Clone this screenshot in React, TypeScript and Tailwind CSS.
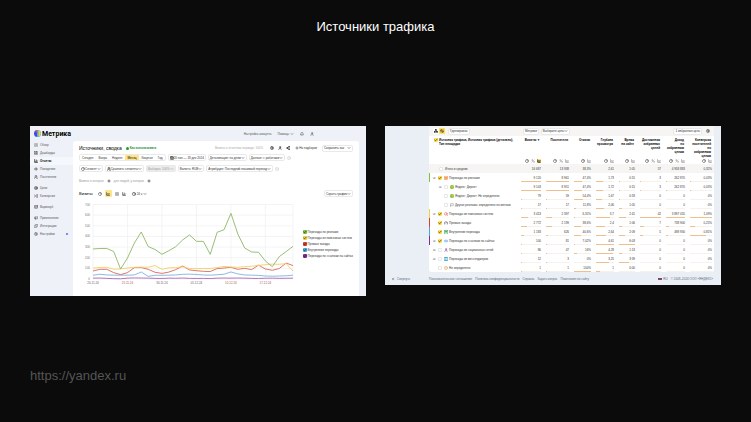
import type { ComponentType, ReactNode } from "react";
import {
  ArrowLeftRight, AreaChart, BarChart3, Bell, Bookmark, CalendarDays, Check, ChevronDown, ChevronsLeft,
  Clock, Database, Eye, Flag, Gauge, House, LayoutGrid, List, Megaphone, Network, PieChart, Plus, Puzzle,
  Radio, Search, Settings, Send, Share2, Shuffle, Target, User, Users, Link2, Percent, HelpCircle,
} from "lucide-react";

type IconType = ComponentType<{ className?: string; strokeWidth?: number }>;

function Icon({ as: As, className = "" }: { as: IconType; className?: string }) {
  return <As className={`size-[4px] shrink-0 ${className}`} strokeWidth={3} />;
}

function Btn({ children, className = "" }: { children: ReactNode; className?: string }) {
  return (
    <button
      type="button"
      className={`flex h-[7px] shrink-0 items-center rounded-[2px] border border-[#e9e9e9] px-px whitespace-nowrap ${className}`}
    >
      {children}
    </button>
  );
}

function Tick({ label, checked, color = "bg-[#ffdf4d]" }: { label: string; checked?: boolean; color?: string }) {
  return (
    <span className="grid size-[4px] shrink-0">
      <input
        type="checkbox"
        aria-label={label}
        defaultChecked={checked}
        className={`col-start-1 row-start-1 size-[4px] appearance-none rounded-[1px] ${checked ? color : "border border-[#e6e6e6] bg-white"}`}
      />
      {checked && <Check className="pointer-events-none col-start-1 row-start-1 size-[4px] text-[#222]" strokeWidth={4} />}
    </span>
  );
}

const nav: { icon: IconType; label: string; active?: boolean; dot?: boolean }[][] = [
  [
    { icon: List, label: "Обзор" },
    { icon: LayoutGrid, label: "Дашборды" },
    { icon: BarChart3, label: "Отчеты", active: true },
    { icon: Eye, label: "Поведение" },
    { icon: Users, label: "Посетители" },
  ],
  [
    { icon: Target, label: "Цели" },
    { icon: Shuffle, label: "Конверсии" },
  ],
  [{ icon: Database, label: "Вариокуб" }],
  [
    { icon: Megaphone, label: "Привлечение" },
    { icon: Puzzle, label: "Интеграции" },
    { icon: Settings, label: "Настройки", dot: true },
  ],
];

const series = [
  { name: "Переходы по рекламе", stroke: "#8fb569", box: "bg-[#7cc142]", values: [282, 287, 287, 258, 94, 197, 338, 442, 305, 277, 232, 266, 304, 367, 414, 354, 354, 232, 439, 463, 617, 423, 291, 254, 251, 169, 116, 210, 257, 307] },
  { name: "Переходы из поисковых систем", stroke: "#f2cf63", box: "bg-[#f5d03c]", values: [103, 108, 110, 92, 95, 103, 110, 112, 110, 126, 91, 105, 107, 114, 98, 98, 98, 99, 107, 118, 113, 110, 116, 120, 128, 135, 140, 138, 145, 75] },
  { name: "Прямые заходы", stroke: "#d9695a", box: "bg-[#d9402f]", values: [75, 91, 91, 60, 41, 60, 107, 107, 91, 63, 53, 65, 88, 122, 85, 78, 72, 70, 98, 103, 110, 91, 100, 88, 130, 94, 82, 98, 150, 126] },
  { name: "Внутренние переходы", stroke: "#7fb2dd", box: "bg-[#4ba3e3]", values: [35, 45, 38, 36, 36, 36, 38, 66, 24, 35, 35, 36, 38, 44, 46, 42, 38, 36, 40, 45, 66, 48, 38, 36, 34, 28, 26, 28, 30, 36] },
  { name: "Переходы по ссылкам на сайтах", stroke: "#a766b8", box: "bg-[#7d2f96]", values: [8, 9, 6, 3, 2, 8, 10, 9, 8, 6, 5, 8, 7, 9, 6, 5, 6, 4, 8, 9, 8, 9, 8, 6, 5, 7, 8, 6, 7, 8] },
];

const days = ["20.11.24", "25.11.24", "30.11.24", "05.12.24", "10.12.24", "17.12.24"];

function Chart() {
  const left = 14;
  const bottom = 79;
  const stepX = 200 / 29;
  const perHundred = 10.64;
  const y = (v: number) => bottom - (v / 100) * perHundred;
  return (
    <svg viewBox="0 0 216 86" className="w-[216px] shrink-0" role="img" aria-label="График визитов">
      {[0, 100, 200, 300, 400, 500, 600, 700].map((v) => (
        <g key={v}>
          <line x1={left} x2={left + 200} y1={y(v)} y2={y(v)} stroke="#ececec" strokeWidth="0.6" />
          <text x={left - 3} y={y(v) + 1} fontSize="3" textAnchor="end" fill="#777">{v}</text>
        </g>
      ))}
      {days.map((d, i) => (
        <g key={d}>
          <line x1={left + i * stepX * 5} x2={left + i * stepX * 5} y1={y(700)} y2={bottom} stroke="#ececec" strokeWidth="0.6" />
          <text x={left + i * stepX * 5} y={bottom + 5} fontSize="3" textAnchor="middle" fill={i === 1 || i === 4 || i === 5 ? "#b05a55" : "#666"}>{d}</text>
        </g>
      ))}
      <line x1={left + 200} x2={left + 200} y1={y(700)} y2={bottom} stroke="#ececec" strokeWidth="0.6" />
      {[...series].reverse().map((s) => (
        <polyline
          key={s.name}
          fill="none"
          stroke={s.stroke}
          strokeWidth="0.9"
          strokeLinejoin="round"
          points={s.values.map((v, i) => `${left + i * stepX},${y(v)}`).join(" ")}
        />
      ))}
    </svg>
  );
}

function Logo() {
  return (
    <svg viewBox="0 0 14 14" className="size-[7px] shrink-0" aria-hidden="true">
      <path d="M7 0a7 7 0 0 0 0 14z" fill="#3d4fe0" />
      <path d="M7 0a7 7 0 0 0-5 2.200L7 7z" fill="#f2503b" />
      <path d="M7 0v14a7 7 0 0 0 0-14z" fill="#28b4f0" />
      <path d="M9 0.500v13A7 7 0 0 0 9 .5z" fill="#ffd43b" />
    </svg>
  );
}

function Overview() {
  const periods = ["Сегодня", "Вчера", "Неделя", "Месяц", "Квартал", "Год"];
  return (
    <section className="overflow-hidden bg-[#eef2f8] text-[3px] leading-[4px] text-[#333]">
      <header className="flex h-[15px] items-center gap-px pr-[52px] pl-[4px]">
        <Logo />
        <span className="font-['Roboto',sans-serif] text-[7px] leading-[8px] font-bold text-black">Метрика</span>
        <nav className="ml-auto flex items-center gap-[6px] text-[#555]">
          <a href="#account">Настройка аккаунта</a>
          <a href="#help" className="flex items-center gap-px">Помощь <Icon as={ChevronDown} /></a>
          <Icon as={Bell} />
          <Icon as={User} />
        </nav>
      </header>
      <div className="flex">
        <nav className="flex w-[43px] shrink-0 flex-col gap-[3px]">
          {nav.map((group, i) => (
            <ul key={i}>
              {group.map((n) => (
                <li key={n.label}>
                  <a
                    href={`#${n.label}`}
                    className={`flex h-[8px] items-center gap-[2px] pr-[5px] pl-[4px] ${n.active ? "bg-[#f4f7fb] font-bold text-black" : "text-[#555]"}`}
                  >
                    <Icon as={n.icon} />
                    <span>{n.label}</span>
                    {n.dot && <span className="ml-auto size-[2px] rounded-full bg-[#4a6cf0]" />}
                  </a>
                </li>
              ))}
            </ul>
          ))}
        </nav>
        <main className="mr-[7px] min-w-0 grow rounded-t-[3px] bg-white px-[6px] pt-[3px] pb-[10px]">
          <div className="flex h-[8px] items-center">
            <h2 className="text-[5px] leading-[8px] font-medium text-black">Источники, сводка</h2>
            <a href="#how" className="ml-[4px] flex items-center gap-px font-bold text-[#1b8a2e]">
              <span className="size-[3px] rounded-full bg-[#1b9e34]" />
              Как использовать
            </a>
            <span className="ml-auto text-[#aaa]">Визиты в отчетном периоде: 100%</span>
            <div className="ml-[7px] flex items-center gap-[4px] text-[#111]">
              <Icon as={Settings} />
              <Icon as={User} />
              <Icon as={Share2} />
            </div>
            <Btn className="ml-[3px] border-transparent font-medium"><Icon as={Plus} />На подборки</Btn>
            <Btn className="ml-[3px]">Сохранить как <Icon as={ChevronDown} className="ml-[3px]" /></Btn>
          </div>
          <div className="mt-[2px] flex items-center gap-[2px]">
            <div className="flex gap-px rounded-[2px] border border-[#e9e9e9]">
              {periods.map((p) => (
                <button key={p} type="button" className={`h-[5px] px-[2px] ${p === "Месяц" ? "bg-[#ffe58a] text-black" : ""}`}>{p}</button>
              ))}
            </div>
            <Btn><Icon as={CalendarDays} />20 ноя — 18 дек 2024</Btn>
            <Btn>Детализация: по дням <Icon as={ChevronDown} /></Btn>
            <Btn>Данные: с роботами <Icon as={ChevronDown} /></Btn>
            <Icon as={HelpCircle} className="text-[#ccc]" />
          </div>
          <div className="mt-[4px] flex items-center gap-[2px]">
            <Btn><Icon as={PieChart} />Сегмент <Icon as={ChevronDown} /></Btn>
            <Btn><Icon as={Users} />Сравнить сегменты <Icon as={ChevronDown} /></Btn>
            <Btn className="bg-[#ececec] text-[#999]">Выборка: 100% <Icon as={ChevronDown} /></Btn>
            <Btn>Валюта: RUB <Icon as={ChevronDown} /></Btn>
            <Btn>Атрибуция: Последний значимый переход <Icon as={ChevronDown} /></Btn>
            <Icon as={HelpCircle} className="text-[#ccc]" />
          </div>
          <div className="mt-[5px] flex h-[8px] items-center gap-[3px] text-[#999]">
            <span>Визиты в которых</span>
            <button type="button" aria-label="Добавить условие" className="text-black"><Icon as={Plus} /></button>
            <span>для людей, у которых</span>
            <button type="button" aria-label="Добавить людей" className="text-black"><Icon as={Plus} /></button>
          </div>
          <div className="mt-[5px] flex h-[7px] items-center gap-[3px]">
            <h3 className="mr-[2px] text-[4px] leading-[7px] font-medium text-black">Визиты</h3>
            <Icon as={PieChart} />
            <span className="grid size-[7px] place-items-center rounded-[1px] bg-[#ffe58a]"><Icon as={AreaChart} /></span>
            <Icon as={List} />
            <Icon as={BarChart3} />
            <span className="ml-[3px] flex items-center gap-px"><Icon as={Clock} />24 ч <Icon as={ChevronDown} /></span>
            <Btn className="ml-auto">Скрыть график <Icon as={ChevronDown} /></Btn>
          </div>
          <div className="mt-[3px] flex items-center justify-between">
            <Chart />
            <ul className="flex flex-col gap-[2px] pt-[2px]">
              {series.map((s) => (
                <li key={s.name} className="flex items-center gap-px whitespace-nowrap">
                  <Tick label={s.name} checked color={s.box} />
                  {s.name}
                </li>
              ))}
            </ul>
          </div>
        </main>
      </div>
    </section>
  );
}

const columns = [
  { head: "Визиты ▼", width: "w-[25px]", icons: 3 },
  { head: "Посетители", width: "w-[28px]", icons: 3 },
  { head: "Отказы", width: "w-[22px]", icons: 2 },
  { head: "Глубина\nпросмотра", width: "w-[23px]", icons: 2 },
  { head: "Время\nна сайте", width: "w-[21px]", icons: 2 },
  { head: "Достижения\nизбранных\nцелей", width: "w-[26px]", icons: 3 },
  { head: "Доход\nпо\nизбранным\nцелям", width: "w-[24px]", icons: 3 },
  { head: "Конверсия\nпосетителей\nпо\nизбранным\nцелям", width: "w-[27px]", icons: 2 },
];

type Row = {
  name: string;
  cells: string[];
  bars: number[];
  nested?: boolean;
  expand?: boolean;
  checked?: boolean;
  mark?: string;
  icon: IconType;
  tint: string;
};

const rows: Row[] = [
  { name: "Переходы по рекламе", expand: true, checked: true, mark: "bg-[#7cc142]", icon: Bookmark, tint: "rounded-[1px] bg-[#f58a3c] text-white", cells: ["9 120", "8 961", "47,4%", "1,73", "0:15", "3", "262 870", "0,03%"], bars: [100, 100, 48, 38, 4, 7, 7, 3] },
  { name: "Яндекс: Директ", nested: true, expand: true, icon: Send, tint: "rounded-full bg-[#57b53c] text-[#ffe04a]", cells: ["9 103", "8 951", "47,4%", "1,72", "0:15", "3", "262 870", "0,03%"], bars: [100, 100, 48, 38, 4, 7, 7, 3] },
  { name: "Яндекс: Директ: Не определено", nested: true, icon: Send, tint: "rounded-full bg-[#57b53c] text-[#ffe04a]", cells: ["79", "59", "54,4%", "1,67", "0:33", "0", "0", "0%"], bars: [1, 1, 54, 36, 9, 0, 0, 0] },
  { name: "Другая реклама: определено по меткам", nested: true, icon: Flag, tint: "text-[#888]", cells: ["17", "17", "11,8%", "2,06", "1:05", "0", "0", "0%"], bars: [1, 1, 12, 45, 18, 0, 0, 0] },
  { name: "Переходы из поисковых систем", expand: true, checked: true, mark: "bg-[#f5d03c]", icon: Search, tint: "text-[#e0453a]", cells: ["3 413", "2 397", "6,31%", "3,7", "2:41", "42", "3 897 055", "1,09%"], bars: [37, 27, 6, 80, 44, 100, 100, 100] },
  { name: "Прямые заходы", checked: true, mark: "bg-[#d9402f]", icon: Gauge, tint: "text-[#333]", cells: ["2 772", "2 199", "38,6%", "2,4", "1:06", "7", "738 900", "0,25%"], bars: [30, 24, 39, 52, 18, 17, 18, 23] },
  { name: "Внутренние переходы", checked: true, mark: "bg-[#4ba3e3]", icon: House, tint: "rounded-[1px] bg-[#38a852] text-white", cells: ["1 183", "626", "40,6%", "2,64", "2:09", "5", "498 930", "0,81%"], bars: [13, 7, 41, 57, 35, 12, 13, 74] },
  { name: "Переходы по ссылкам на сайтах", expand: true, checked: true, mark: "bg-[#7d2f96]", icon: Link2, tint: "text-[#3f8fe8]", cells: ["100", "81", "7,02%", "4,61", "6:03", "0", "0", "0%"], bars: [2, 1, 7, 100, 100, 0, 0, 0] },
  { name: "Переходы из социальных сетей", expand: true, icon: User, tint: "text-[#7a3fa0]", cells: ["86", "47", "16%", "4,28", "1:13", "0", "0", "0%"], bars: [1, 1, 16, 93, 20, 0, 0, 0] },
  { name: "Переходы из мессенджеров", expand: true, icon: Radio, tint: "rounded-[1px] bg-[#2fa3d0] text-white", cells: ["12", "3", "0%", "3,25", "3:39", "0", "0", "0%"], bars: [1, 1, 0, 70, 60, 0, 0, 0] },
  { name: "Не определено", icon: HelpCircle, tint: "text-[#d9a860]", cells: ["1", "1", "100%", "1", "0:00", "0", "0", "0%"], bars: [1, 1, 100, 22, 0, 0, 0, 0] },
];

const totals = ["16 687", "13 938", "38,3%", "2,61", "1:05", "57", "4 958 883", "0,32%"];

function Report() {
  const links = ["Пользовательское соглашение", "Политика конфиденциальности", "Справка", "Задать вопрос", "Пожелания по сайту"];
  return (
    <section className="overflow-hidden bg-[#eaeff6] text-[3px] leading-[4px] text-[#333]">
      <main className="mr-[7px] ml-[44px] overflow-hidden rounded-b-[3px] bg-white">
        <div className="flex h-[10px] items-center gap-[2px] bg-[#f6f5f3] px-[4px]">
          <div className="flex w-[88px] items-center gap-[3px]">
            <div className="flex items-center rounded-[1px] bg-white">
              <button type="button" aria-label="Таблица" className="grid size-[6px] place-items-center"><Icon as={Network} className="text-black" /></button>
              <button type="button" aria-label="Дерево" className="grid size-[6px] place-items-center bg-[#ffdf66]"><Icon as={ArrowLeftRight} className="text-black" /></button>
            </div>
            <Btn className="bg-white">Группировка</Btn>
          </div>
          <Btn className="bg-white">Метрики</Btn>
          <Btn className="bg-white">Выберите цель <Icon as={ChevronDown} /></Btn>
          <Btn className="ml-auto bg-white">1 избранная цель</Btn>
          <Icon as={Settings} className="ml-[2px]" />
        </div>
        <table className="w-full table-fixed border-collapse">
          <thead>
            <tr className="align-top font-bold text-black">
              <th scope="col" className="pt-[2px] text-left">
                <span className="flex gap-px pl-[5px]">
                  <Tick label="Все строки" checked />
                  <span>Источник трафика, Источник трафика (детально), Тип площадки</span>
                </span>
              </th>
              {columns.map((c) => (
                <th key={c.head} scope="col" className={`${c.width} pt-[2px] pr-[3px] text-right whitespace-pre`}>{c.head}</th>
              ))}
            </tr>
            <tr className="text-[#666]">
              <td className="h-[6px]" />
              {columns.map((c, i) => (
                <td key={c.head} className="h-[6px] pr-[2px]">
                  <span className="flex items-center justify-end gap-[2px]">
                    <Icon as={PieChart} className="text-[#333]" />
                    {c.icons === 3 && <Icon as={Percent} className="text-[#999]" />}
                    <Icon as={AreaChart} className={i === 0 ? "rounded-[1px] bg-[#ffdf66] text-black" : "text-[#888]"} />
                  </span>
                </td>
              ))}
            </tr>
          </thead>
          <tbody>
            <tr className="bg-[#f6f5f3]">
              <th scope="row" className="h-[9px] text-left font-normal">
                <span className="flex items-center gap-[2px] pl-[10px]"><Tick label="Итого" />Итого и средние</span>
              </th>
              {totals.map((t, i) => <td key={i} className="pr-[2px] text-right">{t}</td>)}
            </tr>
            {rows.map((r) => (
              <tr key={r.name}>
                <th scope="row" className="h-[9px] p-0 text-left font-normal whitespace-nowrap">
                  <span className="flex h-[9px] items-center">
                    <span className={`mr-[3px] h-[9px] w-px shrink-0 ${r.mark ?? ""}`} />
                    <span className={`flex items-center gap-px ${r.nested ? "pl-[6px]" : ""}`}>
                      <span className="w-[4px] shrink-0 text-[#888]">{r.expand ? "⊞" : ""}</span>
                      <Tick label={r.name} checked={r.checked} />
                      <Icon as={r.icon} className={`ml-px ${r.tint}`} />
                      <span>{r.name}</span>
                    </span>
                  </span>
                </th>
                {r.cells.map((c, i) => (
                  <td key={i} className="py-0 pr-[2px] pl-[3px] text-right">
                    <span className="flex h-[9px] flex-col justify-end">
                      <span className="mb-px">{c}</span>
                      <span className="flex h-px bg-[#f6f1eb]">
                        <span className="h-px bg-[#efbf8c]" style={{ width: `${r.bars[i]}%` }} />
                      </span>
                    </span>
                  </td>
                ))}
              </tr>
            ))}
          </tbody>
        </table>
      </main>
      <footer className="flex h-[13px] items-center pr-[8px] pl-[6px] text-[#667]">
        <button type="button" className="flex w-[38px] items-center gap-[2px]"><Icon as={ChevronsLeft} />Свернуть</button>
        <nav className="flex gap-[3px] whitespace-nowrap">
          {links.map((l) => <a key={l} href="#footer">{l}</a>)}
        </nav>
        <span className="ml-auto flex items-center gap-px">
          <span className="flex h-[2px] w-[4px] flex-col"><span className="h-px bg-[#3f55a5]" /><span className="h-px bg-[#c0392f]" /></span>
          RU
        </span>
        <span className="ml-[3px] whitespace-nowrap">© 2008–2024 ООО «ЯНДЕКС»</span>
      </footer>
    </section>
  );
}

export default function App() {
  return (
    <div className="flex min-h-screen flex-col bg-[#0b0b0b] px-[30px] font-['Liberation_Sans',Arial,sans-serif]">
      <h1 className="pt-[17px] text-center text-[13px] leading-[20px] text-white">Источники трафика</h1>
      <div className="mt-[89px] grid grid-cols-2 items-start gap-[19px]">
        <Overview />
        <Report />
      </div>
      <a href="https://yandex.ru" className="mt-auto mb-[36px] self-start text-[13px] leading-[20px] text-[#555]">https://yandex.ru</a>
    </div>
  );
}
